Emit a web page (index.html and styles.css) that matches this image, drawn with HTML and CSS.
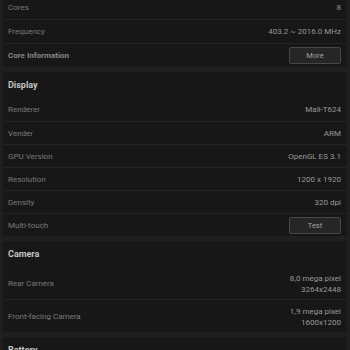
FILE: index.html
```html
<!DOCTYPE html>
<html lang="en">
<head>
    <meta charset="UTF-8">
    <meta name="viewport" content="width=device-width, initial-scale=1.0">
    <title>Device Info</title>
    <link rel="stylesheet" href="styles.css">
</head>
<body>
    <div class="page">
        <div class="card first">
            <div class="row">
                <span class="label">Cores</span>
                <span class="value">8</span>
            </div>
            <div class="row">
                <span class="label">Frequency</span>
                <span class="value">403.2 ~ 2016.0 MHz</span>
            </div>
            <div class="row">
                <span class="label strong">Core Information</span>
                <button class="btn">More</button>
            </div>
        </div>

        <div class="card">
            <div class="card-title">Display</div>
            <div class="row">
                <span class="label">Renderer</span>
                <span class="value">Mali-T624</span>
            </div>
            <div class="row">
                <span class="label">Vender</span>
                <span class="value">ARM</span>
            </div>
            <div class="row">
                <span class="label">GPU Version</span>
                <span class="value">OpenGL ES 3.1</span>
            </div>
            <div class="row">
                <span class="label">Resolution</span>
                <span class="value">1200 x 1920</span>
            </div>
            <div class="row">
                <span class="label">Density</span>
                <span class="value">320 dpi</span>
            </div>
            <div class="row">
                <span class="label">Multi-touch</span>
                <button class="btn">Test</button>
            </div>
        </div>

        <div class="card">
            <div class="card-title">Camera</div>
            <div class="row tall">
                <span class="label">Rear Camera</span>
                <span class="value multi">8,0 mega pixel<br>3264x2448</span>
            </div>
            <div class="row tall">
                <span class="label">Front-facing Camera</span>
                <span class="value multi">1,9 mega pixel<br>1600x1200</span>
            </div>
        </div>

        <div class="card">
            <div class="card-title">Battery</div>
        </div>
    </div>
</body>
</html>
```

FILE: styles.css
```css
* {
    margin: 0;
    padding: 0;
    box-sizing: border-box;
}

body {
    font-family: Roboto, 'Noto Sans', sans-serif;
    background: #1f1f1f;
    color: #8c8c8c;
    overflow: hidden;
}

.page {
    display: flex;
    flex-direction: column;
    gap: 5px;
    padding: 0 3px;
}

.card {
    background: #171717;
}

.card.first {
    margin-top: -4px;
}

.card-title {
    height: 26px;
    display: flex;
    align-items: center;
    padding: 0 5px;
    font-size: 9px;
    font-weight: bold;
    color: #c4c4c4;
}

.row {
    height: 23px;
    display: flex;
    align-items: center;
    justify-content: space-between;
    padding: 0 6px 0 5px;
    font-size: 8px;
}

.row + .row {
    border-top: 1px solid #242424;
}

.first .row + .row {
    height: 24px;
}

.row.tall {
    height: 32px;
}

.row.tall + .row.tall {
    height: 33px;
}

.label {
    color: #7a7a7a;
}

.label.strong {
    font-weight: bold;
    color: #868686;
}

.value {
    color: #989898;
    text-align: right;
}

.value.multi {
    line-height: 11px;
    margin-top: 2px;
}

.btn {
    width: 52px;
    height: 17px;
    background: #262626;
    border: 1px solid #474747;
    border-radius: 2px;
    color: #a0a0a0;
    font-family: Roboto, 'Noto Sans', sans-serif;
    font-size: 7.5px;
}
```
